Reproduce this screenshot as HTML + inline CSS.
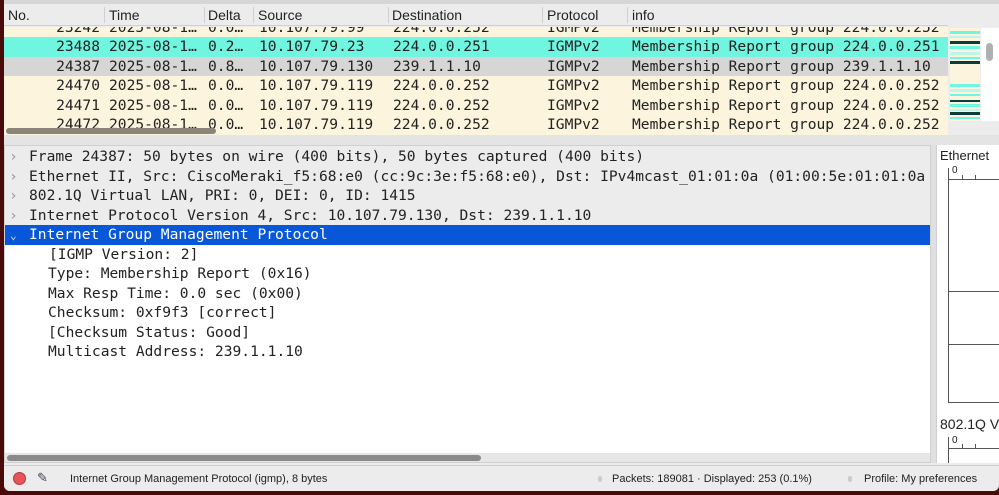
<!DOCTYPE html>
<html><head><meta charset="utf-8"><style>
*{margin:0;padding:0;box-sizing:border-box}
body{width:999px;height:495px;overflow:hidden;background:#4a0a0a;position:relative;font-family:"Liberation Sans",sans-serif}
.win{position:absolute;left:4px;top:0;width:995px;height:491px;background:#ececec;border-radius:0 0 6px 6px;overflow:hidden}
.a{position:absolute;white-space:pre}
.m{font-family:"DejaVu Sans Mono","Liberation Mono",monospace;font-size:14.6px;color:#222}
.hdr{position:absolute;left:0;top:4px;width:944px;height:22px;background:#ececec;border-bottom:1px solid #d0d0d0;font-size:14px;color:#222}
.hdr span{position:absolute;top:3px}
.hdr i{position:absolute;top:3px;width:1px;height:16px;background:#d0d0d0}
.row{position:absolute;left:0;width:944px;height:19.5px}
.row span{position:absolute;top:1px;white-space:pre}
.row .n{left:0;width:96px;text-align:right}
.row .t{left:105px}.row .d{left:204px}.row .s{left:255px}.row .ds{left:389px}.row .p{left:543px}.row .i{left:628px}
</style></head><body>
<div class="win">
<div style="position:absolute;left:0;top:0;width:995px;height:4px;background:#d6d6d6"></div>
<div class="hdr">
<span style="left:4px">No.</span><i style="left:100px"></i>
<span style="left:105px">Time</span><i style="left:200px"></i>
<span style="left:204px">Delta</span><i style="left:249px"></i>
<span style="left:254px">Source</span><i style="left:384px"></i>
<span style="left:388px">Destination</span><i style="left:538px"></i>
<span style="left:543px">Protocol</span><i style="left:623px"></i>
<span style="left:628px">info</span>
</div>
<div style="position:absolute;left:0;top:27px;width:944px;height:108px;background:#fdf4de;overflow:hidden">
<div class="row m" style="top:-9px"><span class="n">23242</span><span class="t">2025-08-1…</span><span class="d">0.0…</span><span class="s">10.107.79.99</span><span class="ds">224.0.0.252</span><span class="p">IGMPv2</span><span class="i">Membership Report group 224.0.0.252</span></div>
<div class="row m" style="top:10px;background:#6ff5e0"><span class="n">23488</span><span class="t">2025-08-1…</span><span class="d">0.2…</span><span class="s">10.107.79.23</span><span class="ds">224.0.0.251</span><span class="p">IGMPv2</span><span class="i">Membership Report group 224.0.0.251</span></div>
<div class="row m" style="top:29.5px;background:#d6d6d6"><span class="n">24387</span><span class="t">2025-08-1…</span><span class="d">0.8…</span><span class="s">10.107.79.130</span><span class="ds">239.1.1.10</span><span class="p">IGMPv2</span><span class="i">Membership Report group 239.1.1.10</span></div>
<div class="row m" style="top:49px"><span class="n">24470</span><span class="t">2025-08-1…</span><span class="d">0.0…</span><span class="s">10.107.79.119</span><span class="ds">224.0.0.252</span><span class="p">IGMPv2</span><span class="i">Membership Report group 224.0.0.252</span></div>
<div class="row m" style="top:68.5px"><span class="n">24471</span><span class="t">2025-08-1…</span><span class="d">0.0…</span><span class="s">10.107.79.119</span><span class="ds">224.0.0.252</span><span class="p">IGMPv2</span><span class="i">Membership Report group 224.0.0.252</span></div>
<div class="row m" style="top:88px"><span class="n">24472</span><span class="t">2025-08-1…</span><span class="d">0.0…</span><span class="s">10.107.79.119</span><span class="ds">224.0.0.252</span><span class="p">IGMPv2</span><span class="i">Membership Report group 224.0.0.252</span></div>
<div style="position:absolute;left:2px;top:101px;width:210px;height:6px;border-radius:3px;background:#8a8578"></div>
</div>
<div style="position:absolute;left:0;top:135px;width:995px;height:10px;background:#e4e4e4"></div>
<div style="position:absolute;left:946px;top:28px;width:30px;height:93px;background:#fdf4de">
<div style="position:absolute;left:0;top:3px;width:30px;height:3px;background:#6ff5e0"></div>
<div style="position:absolute;left:0;top:8px;width:30px;height:2px;background:#bff5e5"></div>
<div style="position:absolute;left:0;top:13px;width:30px;height:3px;background:#0e3a3a"></div>
<div style="position:absolute;left:0;top:18px;width:30px;height:3px;background:#6ff5e0"></div>
<div style="position:absolute;left:0;top:24px;width:30px;height:3px;background:#bff5e5"></div>
<div style="position:absolute;left:0;top:29px;width:30px;height:2px;background:#6ff5e0"></div>
<div style="position:absolute;left:0;top:33px;width:30px;height:3px;background:#0e3a3a"></div>
<div style="position:absolute;left:0;top:56px;width:30px;height:3px;background:#6ff5e0"></div>
<div style="position:absolute;left:0;top:61px;width:30px;height:3px;background:#bff5e5"></div>
<div style="position:absolute;left:0;top:66px;width:30px;height:2px;background:#6ff5e0"></div>
<div style="position:absolute;left:0;top:72px;width:30px;height:2px;background:#0e3a3a"></div>
<div style="position:absolute;left:0;top:76px;width:30px;height:3px;background:#6ff5e0"></div>
<div style="position:absolute;left:0;top:81px;width:30px;height:2px;background:#bff5e5"></div>
<div style="position:absolute;left:0;top:84px;width:30px;height:3px;background:#0e3a3a"></div>
<div style="position:absolute;left:0;top:89px;width:30px;height:2px;background:#6ff5e0"></div>
</div>
<div style="position:absolute;left:977px;top:28px;width:18px;height:93px;background:#fff">
<div style="position:absolute;left:5px;top:15px;width:7px;height:18px;border-radius:4px;background:#b0b0b0"></div>
</div>
<div style="position:absolute;left:0;top:145px;width:927px;height:318px;background:#fff;border:1px solid #d0d0d0;overflow:hidden">
<div style="position:absolute;left:0;top:0;width:927px;height:79px;background:#ececec"></div>
<div class="a m" style="left:4px;top:2px;color:#999">›</div><div class="a m" style="left:24px;top:2px">Frame 24387: 50 bytes on wire (400 bits), 50 bytes captured (400 bits)</div>
<div class="a m" style="left:4px;top:21.5px;color:#999">›</div><div class="a m" style="left:24px;top:21.5px">Ethernet II, Src: CiscoMeraki_f5:68:e0 (cc:9c:3e:f5:68:e0), Dst: IPv4mcast_01:01:0a (01:00:5e:01:01:0a</div>
<div class="a m" style="left:4px;top:41px;color:#999">›</div><div class="a m" style="left:24px;top:41px">802.1Q Virtual LAN, PRI: 0, DEI: 0, ID: 1415</div>
<div class="a m" style="left:4px;top:60.5px;color:#999">›</div><div class="a m" style="left:24px;top:60.5px">Internet Protocol Version 4, Src: 10.107.79.130, Dst: 239.1.1.10</div>
<div style="position:absolute;left:0;top:79px;width:927px;height:20px;background:#0757d8"></div>
<div class="a m" style="left:5px;color:#cfe0ff;font-size:11px;top:83px">⌄</div><div class="a m" style="left:24px;top:80px;color:#fff">Internet Group Management Protocol</div>
<div class="a m" style="left:44px;top:99.5px">[IGMP Version: 2]</div>
<div class="a m" style="left:43px;top:119px">Type: Membership Report (0x16)</div>
<div class="a m" style="left:43px;top:138.5px">Max Resp Time: 0.0 sec (0x00)</div>
<div class="a m" style="left:43px;top:158px">Checksum: 0xf9f3 [correct]</div>
<div class="a m" style="left:43px;top:177.5px">[Checksum Status: Good]</div>
<div class="a m" style="left:43px;top:197px">Multicast Address: 239.1.1.10</div>
<div style="position:absolute;left:0;top:307px;width:925px;height:9px;background:#e6e6e6"></div>
<div style="position:absolute;left:2px;top:309px;width:474px;height:6px;border-radius:3px;background:#8a8a8a"></div>
</div>
<div style="position:absolute;left:927px;top:145px;width:5px;height:318px;background:#e0e0e0"></div>
<div style="position:absolute;left:932px;top:145px;width:63px;height:318px;background:#fff;border-left:1px solid #d0d0d0;overflow:hidden;font-size:13px;color:#222">
<div class="a" style="left:3px;top:3px">Ethernet</div>
<div class="a" style="left:15px;top:20px;font-size:10px">0</div>
<div style="position:absolute;left:11px;top:23px;width:1px;height:234px;background:#555"></div>
<div style="position:absolute;left:11px;top:34px;width:60px;height:1px;background:#555"></div>
<div style="position:absolute;left:25px;top:30px;width:1px;height:5px;background:#555"></div>
<div style="position:absolute;left:38px;top:30px;width:1px;height:5px;background:#555"></div>
<div style="position:absolute;left:11px;top:146px;width:60px;height:1px;background:#555"></div>
<div style="position:absolute;left:11px;top:199px;width:60px;height:1px;background:#555"></div>
<div style="position:absolute;left:11px;top:257px;width:60px;height:1px;background:#555"></div>
<div class="a" style="left:3px;top:271px;font-size:14px">802.1Q V</div>
<div class="a" style="left:15px;top:290px;font-size:10px">0</div>
<div style="position:absolute;left:11px;top:292px;width:1px;height:30px;background:#555"></div>
<div style="position:absolute;left:11px;top:303px;width:60px;height:1px;background:#555"></div>
<div style="position:absolute;left:25px;top:299px;width:1px;height:5px;background:#555"></div>
<div style="position:absolute;left:38px;top:299px;width:1px;height:5px;background:#555"></div>
</div>
<div style="position:absolute;left:0;top:465px;width:995px;height:26px;background:#ececec;border-top:1px solid #d0d0d0;font-size:11px;color:#222">
<div style="position:absolute;left:9px;top:6px;width:13px;height:13px;border-radius:50%;background:#e8545a;border:1px solid #b03a40"></div>
<div class="a" style="left:33px;top:4px;font-size:13px;color:#445">✎</div>
<div class="a" style="left:66px;top:7px">Internet Group Management Protocol (igmp), 8 bytes</div>
<div style="position:absolute;left:594px;top:10px;width:4px;height:6px;background:#ccc;border-radius:2px"></div>
<div class="a" style="left:608px;top:7px">Packets: 189081 · Displayed: 253 (0.1%)</div>
<div style="position:absolute;left:844px;top:10px;width:4px;height:6px;background:#ccc;border-radius:2px"></div>
<div class="a" style="left:860px;top:7px">Profile: My preferences</div>
</div>
</div>
</body></html>
